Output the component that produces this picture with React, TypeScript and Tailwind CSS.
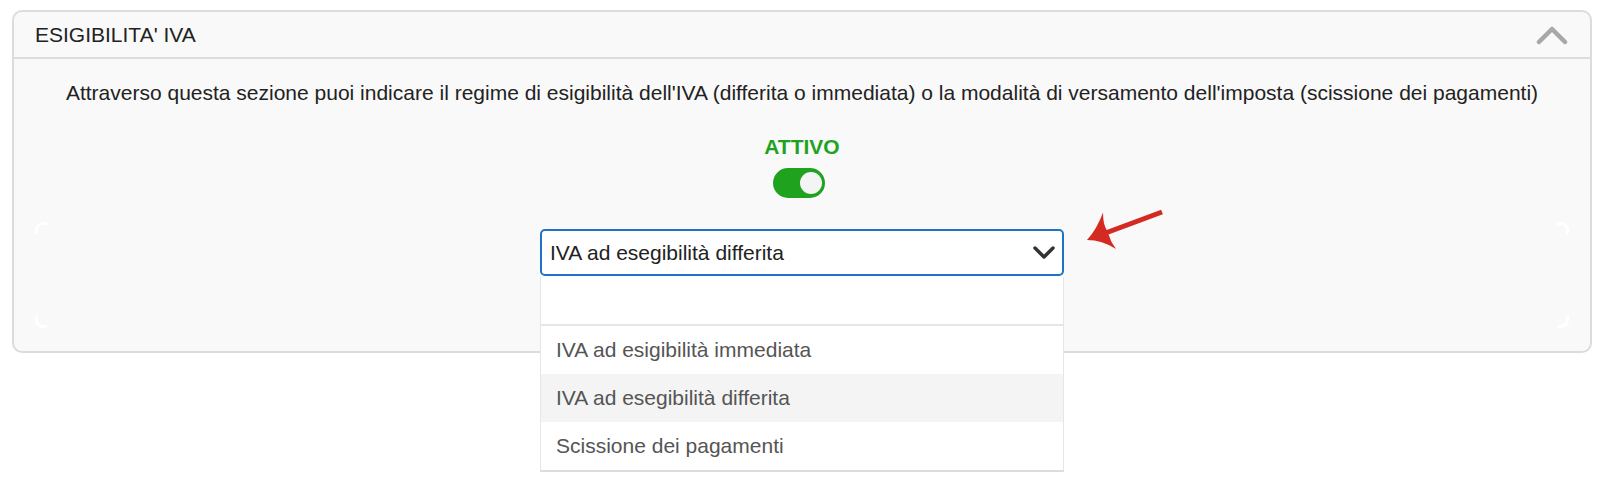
import React from 'react';

const font = { fontFamily: '"Liberation Sans", Arial, sans-serif' };

const options = [
  'IVA ad esigibilità immediata',
  'IVA ad esegibilità differita',
  'Scissione dei pagamenti',
];

const Corner: React.FC<{ className: string }> = ({ className }) => (
  <span className={`absolute w-[12px] h-[12px] border-white ${className}`} />
);

export default function App() {
  const selected = 1;

  return (
    <div className="relative w-[1604px] h-[502px] bg-white pt-[10px] px-[12px]" style={font}>
      <div className="border-2 border-[#dcdcdc] rounded-[10px] bg-[#f9f9f9] h-[343px]">
        {/* header */}
        <div className="h-[47px] flex items-center justify-between pl-[21px] pr-[22px] border-b-2 border-[#dcdcdc]">
          <span className="text-[21px] text-[#222]">ESIGIBILITA' IVA</span>
          <svg width="32" height="20" viewBox="0 0 32 20">
            <polyline points="3,17 16,4 29,17" fill="none" stroke="#a8a8a8" strokeWidth="4.5" strokeLinecap="round" strokeLinejoin="round" />
          </svg>
        </div>

        {/* body */}
        <div className="flex flex-col items-center pt-[21px] px-[21px]">
          <p className="text-[21px] leading-[25px] text-[#222] text-center whitespace-nowrap">
            Attraverso questa sezione puoi indicare il regime di esigibilità dell'IVA (differita o immediata) o la modalità di versamento dell'imposta (scissione dei pagamenti)
          </p>

          <div className="mt-[29px] text-[21px] leading-[25px] font-bold text-[#1fa31f]">ATTIVO</div>
          <div className="mt-[9px] mr-[7px] w-[52px] h-[30px] rounded-full bg-[#1fa31f] flex items-center justify-end pr-[3px]">
            <span className="w-[22px] h-[22px] rounded-full bg-[#f4f4f4]" />
          </div>

          <div className="relative mt-[24px] w-full h-[106px] flex justify-center pt-[7px]">
            <Corner className="left-0 top-0 border-l-[3px] border-t-[3px] rounded-tl-[8px]" />
            <Corner className="right-0 top-0 border-r-[3px] border-t-[3px] rounded-tr-[8px]" />
            <Corner className="left-0 bottom-0 border-l-[3px] border-b-[3px] rounded-bl-[8px]" />
            <Corner className="right-0 bottom-0 border-r-[3px] border-b-[3px] rounded-br-[8px]" />

            <div className="relative w-[524px]">
              <div className="h-[47px] bg-white border-2 border-[#1f74c2] rounded-[5px] flex items-center justify-between pl-[8px] pr-[6px]">
                <span className="text-[21px] text-[#222]">IVA ad esegibilità differita</span>
                <svg width="24" height="16" viewBox="0 0 24 16">
                  <polyline points="3,3 12,12 21,3" fill="none" stroke="#333" strokeWidth="3.5" strokeLinecap="round" strokeLinejoin="round" />
                </svg>
              </div>

              {/* open dropdown */}
              <div className="absolute left-0 right-0 top-[48px] z-10 bg-white border-x border-[#e6e6e6] border-b-2 border-b-[#dcdcdc]">
                <div className="h-[49px] border-b-2 border-[#e6e6e6]" />
                {options.map((o, i) => (
                  <div
                    key={o}
                    className={`h-[48px] flex items-center pl-[15px] text-[21px] text-[#555] ${i === selected ? 'bg-[#f4f4f4]' : 'bg-white'}`}
                  >
                    {o}
                  </div>
                ))}
              </div>
            </div>
          </div>
        </div>
      </div>

      {/* annotation arrow */}
      <svg className="absolute left-[1080px] top-[205px]" width="90" height="50" viewBox="0 0 90 50">
        <path
          d="M7,35 Q17,24 23,7.5 Q23,19 26.7,25 L81.1,4.7 L82.9,9.3 L28.5,29.6 Q31,38 36,44 Q22,35 7,35 Z"
          fill="#d42a22"
        />
      </svg>
    </div>
  );
}
